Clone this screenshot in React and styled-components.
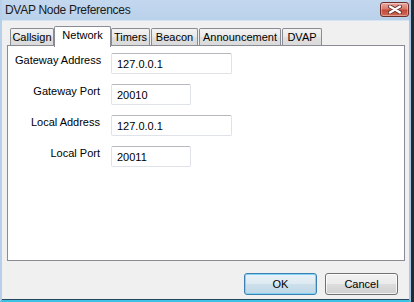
import React from "react";
import styled, { createGlobalStyle } from "styled-components";

const GlobalStyle = createGlobalStyle`
  html, body {
    margin: 0;
    padding: 0;
  }
  body {
    width: 414px;
    height: 302px;
    overflow: hidden;
    background: #1f2c36;
    font-family: "Liberation Sans", Arial, sans-serif;
    font-size: 11px;
    color: #000;
  }
`;

const Window = styled.div`
  width: 407px;
  height: 299px;
  display: flex;
  flex-direction: column;
  border-left: 2px solid #b7d0ea;
  border-right: 2px solid #a9c6e4;
  border-bottom: 3px solid #3cc2e2;
  background: #bfd5ed;
`;

const TitleBar = styled.div`
  height: 20px;
  display: flex;
  align-items: flex-start;
  justify-content: space-between;
  padding-left: 3px;
  background: linear-gradient(#c3d8ef, #bad1ea);
`;

const Title = styled.span`
  font-size: 12px;
  letter-spacing: -0.3px;
  line-height: 20px;
  color: #1a1a1a;
`;

const CloseButton = styled.div`
  width: 27px;
  height: 13px;
  margin-top: 2px;
  display: flex;
  align-items: center;
  justify-content: center;
  border: 1px solid #6e2e2b;
  border-radius: 3px;
  background: linear-gradient(#e8a99f 0%, #d77b6d 45%, #c44a3b 55%, #cf6a55 100%);
  box-shadow: inset 0 0 0 1px rgba(255, 255, 255, 0.35);
`;

const Client = styled.div`
  flex: 1;
  display: flex;
  flex-direction: column;
  padding: 5px 4px 4px 5px;
  background: #f0f0f0;
  border-top: 1px solid #d6e4f3;
  border-bottom: 1px solid #26465e;
`;

const TabRow = styled.div`
  height: 20px;
  display: flex;
  gap: 1px;
  padding-left: 3px;
  margin-bottom: -1px;
`;

const Tab = styled.div`
  position: relative;
  z-index: ${({ $active }) => ($active ? 2 : 1)};
  box-sizing: border-box;
  width: ${({ $w }) => $w}px;
  height: ${({ $active }) => ($active ? 21 : 17)}px;
  margin: ${({ $active }) => ($active ? "0 -1px" : "2px 0 0")};
  padding-top: 2px;
  text-align: center;
  line-height: 13px;
  border: 1px solid #898c95;
  border-bottom: none;
  border-radius: 2px 2px 0 0;
  background: ${({ $active }) =>
    $active ? "#ffffff" : "linear-gradient(#f3f3f3, #e9e9e9 50%, #e0e0e0 51%, #dadada)"};
`;

const Panel = styled.div`
  height: 216px;
  box-sizing: border-box;
  border: 1px solid #898c95;
  background: #ffffff;
  padding: 7px 7px;
  display: flex;
  flex-direction: column;
  gap: 10px;
`;

const Row = styled.div`
  display: flex;
  gap: 11px;
  height: 21px;
`;

const Label = styled.div`
  width: 85px;
  text-align: right;
  line-height: 13px;
  padding-top: 1px;
  white-space: nowrap;
`;

const Field = styled.input`
  box-sizing: border-box;
  width: ${({ $w }) => $w}px;
  height: 21px;
  margin: 0;
  padding: 0 5px;
  font-family: "Liberation Sans", Arial, sans-serif;
  font-size: 11px;
  color: #000;
  background: #fff;
  border: 1px solid #dfe2e8;
  border-top-color: #b5b8bf;
  border-radius: 2px;
  outline: none;
`;

const Footer = styled.div`
  display: flex;
  justify-content: flex-end;
  gap: 8px;
  margin-top: 12px;
  padding-right: 7px;
`;

const Button = styled.div`
  box-sizing: border-box;
  width: 73px;
  height: 22px;
  display: flex;
  align-items: center;
  justify-content: center;
  border: 1px solid ${({ $default }) => ($default ? "#3c7fb1" : "#707070")};
  border-radius: 3px;
  background: ${({ $default }) =>
    $default
      ? "linear-gradient(#e9f2f8 0%, #dde9f1 50%, #cde0ec 51%, #c0d7e6 100%)"
      : "linear-gradient(#f2f2f2 0%, #ebebeb 50%, #dddddd 51%, #cfcfcf 100%)"};
  box-shadow: inset 0 0 0 1px
    ${({ $default }) => ($default ? "rgba(120, 210, 245, 0.9)" : "rgba(255, 255, 255, 0.75)")};
`;

const tabs = [
  { name: "Callsign", w: 44 },
  { name: "Network", w: 57, active: true },
  { name: "Timers", w: 39 },
  { name: "Beacon", w: 47 },
  { name: "Announcement", w: 82 },
  { name: "DVAP", w: 40 },
];

const fields = [
  { label: "Gateway Address", value: "127.0.0.1", w: 121 },
  { label: "Gateway Port", value: "20010", w: 80 },
  { label: "Local Address", value: "127.0.0.1", w: 121 },
  { label: "Local Port", value: "20011", w: 80 },
];

export default function App() {
  return (
    <>
      <GlobalStyle />
      <Window>
        <TitleBar>
          <Title>DVAP Node Preferences</Title>
          <CloseButton>
            <svg width="14" height="9" viewBox="0 0 14 9">
              <path d="M2 1.5 L12 7.5 M12 1.5 L2 7.5" stroke="#5b2a28" strokeWidth="4" strokeLinecap="round" />
              <path d="M2 1.5 L12 7.5 M12 1.5 L2 7.5" stroke="#ffffff" strokeWidth="2.4" strokeLinecap="round" />
            </svg>
          </CloseButton>
        </TitleBar>
        <Client>
          <TabRow>
            {tabs.map((t) => (
              <Tab key={t.name} $w={t.w} $active={t.active}>
                {t.name}
              </Tab>
            ))}
          </TabRow>
          <Panel>
            {fields.map((f) => (
              <Row key={f.label}>
                <Label>{f.label}</Label>
                <Field $w={f.w} defaultValue={f.value} readOnly />
              </Row>
            ))}
          </Panel>
          <Footer>
            <Button $default>OK</Button>
            <Button>Cancel</Button>
          </Footer>
        </Client>
      </Window>
    </>
  );
}
